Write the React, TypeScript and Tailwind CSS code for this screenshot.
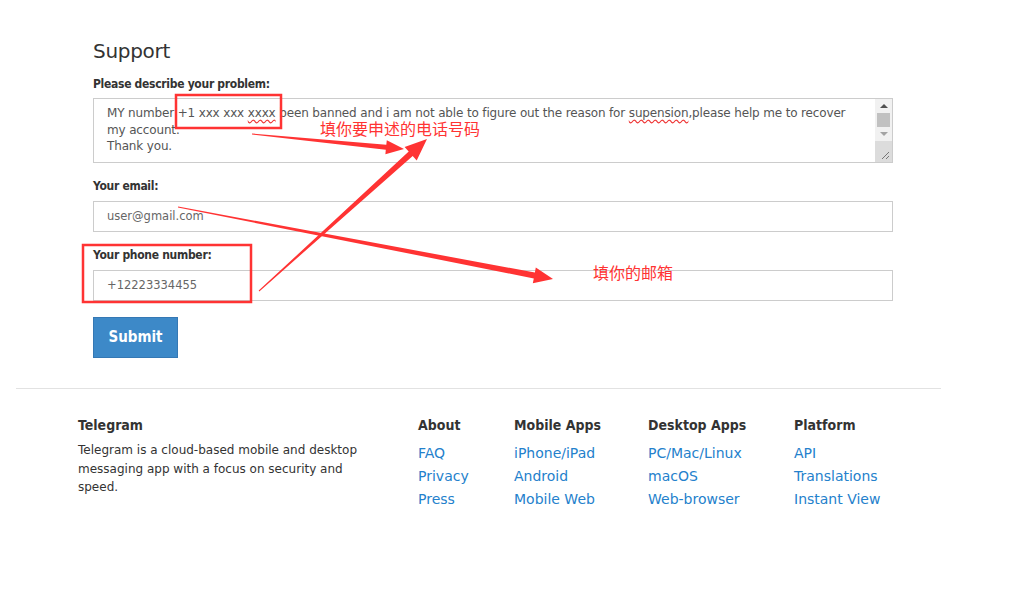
import React from 'react';

type Pt = [number, number];

// polygon for a tapered annotation arrow (tail thin, head filled)
function arrowPoints(tail: Pt, tip: Pt, headLen: number, headHalf: number, shaftHalf: number, tailHalf = 0.5) {
  const dx = tip[0] - tail[0];
  const dy = tip[1] - tail[1];
  const len = Math.hypot(dx, dy);
  const ux = dx / len;
  const uy = dy / len;
  const nx = -uy;
  const ny = ux;
  const bx = tip[0] - ux * headLen;
  const by = tip[1] - uy * headLen;
  const pts: Pt[] = [
    [tail[0] + nx * tailHalf, tail[1] + ny * tailHalf],
    [bx + nx * shaftHalf, by + ny * shaftHalf],
    [bx + nx * headHalf, by + ny * headHalf],
    tip,
    [bx - nx * headHalf, by - ny * headHalf],
    [bx - nx * shaftHalf, by - ny * shaftHalf],
    [tail[0] - nx * tailHalf, tail[1] - ny * tailHalf],
  ];
  return pts.map(p => `${p[0].toFixed(1)},${p[1].toFixed(1)}`).join(' ');
}

const footerCols = [
  { title: 'About', links: ['FAQ', 'Privacy', 'Press'] },
  { title: 'Mobile Apps', links: ['iPhone/iPad', 'Android', 'Mobile Web'] },
  { title: 'Desktop Apps', links: ['PC/Mac/Linux', 'macOS', 'Web-browser'] },
  { title: 'Platform', links: ['API', 'Translations', 'Instant View'] },
];

const bold = "font-['DejaVu_Sans_Condensed','DejaVu_Sans',sans-serif] font-bold";

function Field({ label, value }: { label: string; value: string }) {
  return (
    <div className="mt-[15px]">
      <div className={`text-[12px] leading-[16px] tracking-[-0.3px] text-[#333] ${bold}`}>{label}</div>
      <div className="mt-[7px] h-[31px] border border-[#ccc] flex items-center px-[13px] text-[11.5px] text-[#666]">
        {value}
      </div>
    </div>
  );
}

export default function App() {
  return (
    <div
      className="relative w-[1011px] h-[598px] bg-white overflow-hidden text-[#333]"
      style={{ fontFamily: '"DejaVu Sans", "Noto Sans CJK SC", sans-serif' }}
    >
      {/* Form */}
      <div className="pl-[93px] pt-[38px] w-[893px]">
        <h1 className="text-[20px] leading-[26px] font-normal tracking-[-0.3px] text-[#333]">Support</h1>
        <div className={`mt-[12px] text-[12px] leading-[16px] tracking-[-0.3px] ${bold}`}>Please describe your problem:</div>
        <div className="mt-[6px] h-[65px] border border-[#ccc] flex">
          <div className="flex-1 pl-[13px] pr-[10px] pt-[6px] text-[12px] leading-[16.5px] tracking-[-0.15px] text-[#555]">
            MY number +1 xxx xxx <span className="underline decoration-wavy decoration-[#e33] underline-offset-2">xxxx</span> been banned and i am not able to figure out the reason for{' '}
            <span className="underline decoration-wavy decoration-[#e33] underline-offset-2">supension</span>,please help me to recover my account.
            <br />
            Thank you.
          </div>
          <div className="w-[17px] bg-[#f1f1f1] flex flex-col items-center">
            <div className="h-[14px] flex items-center justify-center">
              <div className="w-0 h-0 border-l-[4px] border-r-[4px] border-b-[4px] border-l-transparent border-r-transparent border-b-[#505050]" />
            </div>
            <div className="w-[13px] h-[14px] bg-[#c1c1c1]" />
            <div className="h-[14px] flex items-center justify-center">
              <div className="w-0 h-0 border-l-[4px] border-r-[4px] border-t-[4px] border-l-transparent border-r-transparent border-t-[#a3a3a3]" />
            </div>
            <div className="flex-1 w-full bg-[#dcdcdc] flex items-end justify-end p-[2px]">
              <svg width="9" height="9" viewBox="0 0 9 9">
                <path d="M1 8 L8 1 M5 8 L8 5" stroke="#777" strokeWidth="1" />
              </svg>
            </div>
          </div>
        </div>
        <Field label="Your email:" value="user@gmail.com" />
        <Field label="Your phone number:" value="+12223334455" />
        <button className={`mt-[16px] w-[85px] h-[41px] bg-[#3d89c8] border border-[#3578b4] text-white text-[15px] ${bold}`}>
          Submit
        </button>
      </div>

      {/* Divider */}
      <div className="ml-[16px] mt-[30px] w-[925px] h-px bg-[#e2e2e2]" />

      {/* Footer */}
      <div className="flex pl-[78px] pt-[26px]">
        <div className="w-[340px]">
          <div className={`text-[14px] leading-[20px] text-[#333] ${bold}`}>Telegram</div>
          <p className="mt-[6px] w-[290px] text-[12px] leading-[18.5px] text-[#333]">
            Telegram is a cloud-based mobile and desktop messaging app with a focus on security and speed.
          </p>
        </div>
        {footerCols.map((c, i) => (
          <div key={c.title} className={i === 0 ? 'w-[96px]' : i === 1 ? 'w-[134px]' : i === 2 ? 'w-[146px]' : 'w-[120px]'}>
            <div className={`text-[14px] leading-[20px] text-[#333] ${bold}`}>{c.title}</div>
            <div className="mt-[7px] flex flex-col">
              {c.links.map(l => (
                <a key={l} className="text-[14px] leading-[23px] text-[#2481cc]">{l}</a>
              ))}
            </div>
          </div>
        ))}
      </div>

      {/* Annotations */}
      <svg className="absolute inset-0 pointer-events-none" width="1011" height="598">
        <rect x="176" y="95" width="105" height="33" fill="none" stroke="#f33" strokeWidth="2.5" />
        <rect x="83" y="245" width="168" height="57" fill="none" stroke="#f33" strokeWidth="2.5" />
        <polygon points={arrowPoints([252, 134], [404, 149], 18, 7, 2.5)} fill="#f33" />
        <polygon points={arrowPoints([259, 291], [427, 139], 22, 9, 3)} fill="#f33" />
        <polygon points={arrowPoints([178, 207], [553, 279], 19, 8, 3)} fill="#f33" />
      </svg>
      <div className="absolute left-[320px] top-[120px] text-[16px] leading-[20px] text-[#f33]">填你要申述的电话号码</div>
      <div className="absolute left-[593px] top-[264px] text-[16px] leading-[20px] text-[#f33]">填你的邮箱</div>
    </div>
  );
}
